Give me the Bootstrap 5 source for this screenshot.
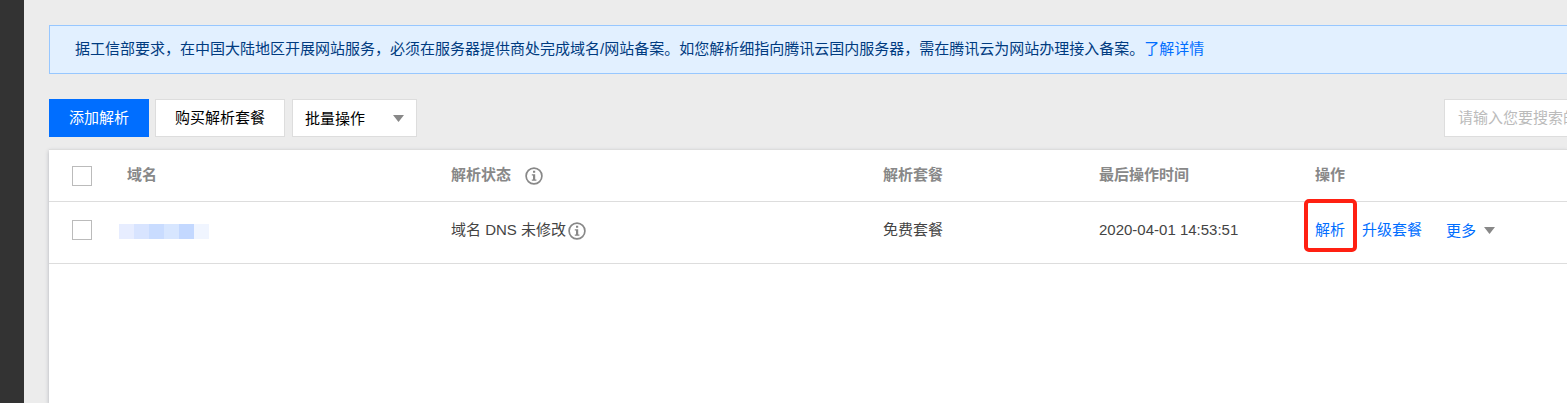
<!DOCTYPE html>
<html lang="zh-CN">
<head>
<meta charset="utf-8">
<meta name="viewport" content="width=device-width, initial-scale=1">
<title>域名解析列表</title>
<link href="https://cdn.jsdelivr.net/npm/bootstrap@5.3.0/dist/css/bootstrap.min.css" rel="stylesheet">
<style>
  body { font: 15px/22px "Liberation Sans", "Noto Sans CJK SC", sans-serif; background: #ececec; color: #444; }
  a { color: #006eff; text-decoration: none; }
  .side-rail { width: 24px; background: #333; }
  .workspace { padding: 25px 0 0 25px; min-width: 0; }
  .notice { height: 49px; padding: 0 25px 2px; border: 1px solid #97c7ff; border-right: 0; background: #e2f0ff; color: #003b80; }
  .toolbar-row { margin-top: 25px; height: 38px; }
  .tool { height: 38px; border: 1px solid #ddd; border-radius: 0; background: #fff; color: #000; font-size: 15px; line-height: 22px; padding: 0 0 1px; }
  .tool-primary { width: 100px; background: #006eff; border-color: #006eff; color: #fff; }
  .tool-buy { width: 130px; margin-left: 6px; }
  .tool-batch { width: 125px; margin-left: 7px; padding: 1px 12px 0; }
  .search-box { width: 123px; height: 38px; border: 1px solid #ddd; border-right: 0; background: #fff; color: #bbb; padding: 0 0 1px 13px; }
  .caret { width: 11px; height: 7px; fill: #888; flex: none; }
  .panel { margin-top: 12px; border-top: 1px solid #ddd; background: #fff; box-shadow: 0 2px 4px rgba(54, 58, 80, .32); }
  .line { border-bottom: 1px solid #ddd; }
  .line-head { height: 52px; color: #888; font-weight: 700; padding-bottom: 1px; }
  .line-data { height: 62px; padding-bottom: 6px; }
  .c-check { width: 78px; padding-left: 23px; }
  .line-data .tick { margin-top: 0; }
  .c-name { width: 324px; }
  .c-state { width: 432px; }
  .c-plan, .c-time { width: 216px; }
  .tick { width: 20px; height: 20px; border: 1px solid #bbb; border-radius: 0; margin: 2px 0 0; display: block; background: #fff; appearance: none; }
  .info { width: 18px; height: 18px; flex: none; margin-top: 2px; }
  .masked { margin-left: -8px; margin-top: 3px; }
  .masked i { width: 15px; height: 15px; }
  .callout { position: absolute; left: -11px; top: -20px; width: 53px; height: 53px; border: 4px solid #ff2012; border-radius: 5px; pointer-events: none; }
</style>
<script src="https://cdn.jsdelivr.net/npm/bootstrap@5.3.0/dist/js/bootstrap.bundle.min.js"></script>
</head>
<body class="m-0 vh-100 overflow-hidden">
<svg class="d-none">
  <symbol id="info" viewBox="0 0 18 18">
    <circle cx="9" cy="9" r="7.9" fill="none" stroke="#888" stroke-width="1.7"/>
    <path d="M8 3.8h2.2v2H8zM6.8 7.3h3.4v5.2h1.2v1.2H6.8v-1.2H8V8.5H6.8z" fill="#888"/>
  </symbol>
  <symbol id="caret" viewBox="0 0 11 7"><path d="M0 0h11L5.5 7z"/></symbol>
</svg>
<div class="d-flex vh-100">
  <aside class="side-rail flex-shrink-0"></aside>
  <main class="workspace flex-grow-1 d-flex flex-column">
    <div class="notice d-flex align-items-center text-nowrap flex-shrink-0">据工信部要求，在中国大陆地区开展网站服务，必须在服务器提供商处完成域名/网站备案。如您解析细指向腾讯云国内服务器，需在腾讯云为网站办理接入备案。<a href="#">了解详情</a></div>
    <div class="toolbar-row d-flex flex-shrink-0">
      <button class="btn tool tool-primary">添加解析</button>
      <button class="btn tool tool-buy">购买解析套餐</button>
      <button class="btn tool tool-batch d-flex align-items-center justify-content-between">批量操作<svg class="caret"><use href="#caret"/></svg></button>
      <div class="search-box ms-auto d-flex align-items-center text-nowrap overflow-hidden">请输入您要搜索的</div>
    </div>
    <section class="panel flex-grow-1">
      <div class="line line-head d-flex align-items-center">
        <div class="c-check"><input type="checkbox" class="tick" aria-label="全选"></div>
        <div class="c-name">域名</div>
        <div class="c-state d-flex align-items-center">解析状态<svg class="info" style="margin-left:14px"><use href="#info"/></svg></div>
        <div class="c-plan">解析套餐</div>
        <div class="c-time">最后操作时间</div>
        <div>操作</div>
      </div>
      <div class="line line-data d-flex align-items-center">
        <div class="c-check"><input type="checkbox" class="tick" aria-label="选择"></div>
        <div class="c-name"><div class="masked d-flex">
          <i style="background:#e7edff"></i><i style="background:#d8e4ff"></i><i style="background:#c9dcff"></i><i style="background:#d7e6ff"></i><i style="background:#c3d8ff"></i><i style="background:#f0f5ff"></i>
        </div></div>
        <div class="c-state d-flex align-items-center">域名 DNS 未修改<svg class="info" style="margin-left:2px"><use href="#info"/></svg></div>
        <div class="c-plan">免费套餐</div>
        <div class="c-time">2020-04-01 14:53:51</div>
        <div class="d-flex align-items-center text-nowrap">
          <span class="position-relative"><a href="#">解析</a><span class="callout"></span></span>
          <a href="#" style="margin-left:17px">升级套餐</a>
          <a href="#" class="d-flex align-items-center" style="margin:2px 0 0 24px">更多<svg class="caret" style="margin-left:8px"><use href="#caret"/></svg></a>
        </div>
      </div>
    </section>
  </main>
</div>
</body>
</html>
